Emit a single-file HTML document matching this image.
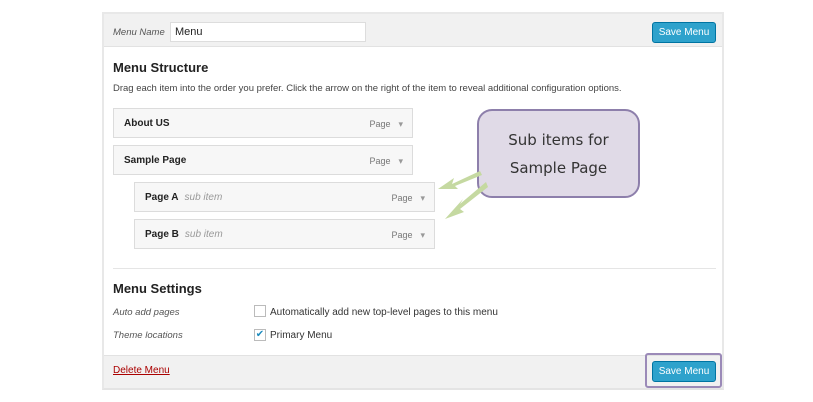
<!DOCTYPE html>
<html><head><style>
*{margin:0;padding:0;box-sizing:border-box}
body{width:813px;height:402px;background:#fff;position:relative;font-family:"Liberation Sans",sans-serif;color:#222;overflow:hidden}
.a{position:absolute}
.item{position:absolute;height:30px;border:1px solid #dcdcdc;background:#f7f7f7;font-size:10px;font-weight:bold;line-height:30px;padding-left:10px;color:#222}
.item .pg{position:absolute;right:9px;top:0;font-weight:normal;color:#777;font-size:9px}
.item .pg:after{content:"▾";margin-left:8px;color:#999;font-size:9px}
.item i{font-weight:normal;color:#999;margin-left:6px}
.btn{position:absolute;background:#2ea2cc;border:1px solid #0074a2;border-radius:3px;color:#fff;font-size:10px;text-align:center;line-height:19px}
.lbl{font-style:italic;color:#555;font-size:9.5px}
</style></head><body>
<div class="a" style="left:102px;top:12px;width:622px;height:378px;border:2px solid #e8e8e8;border-bottom:2px solid #e4e4e4;background:#fff"></div>
<div class="a" style="left:104px;top:14px;width:618px;height:33px;background:#f1f1f1;border-bottom:1px solid #e2e2e2"></div>
<div class="a lbl" style="left:113px;top:27px">Menu Name</div>
<div class="a" style="left:170px;top:22px;width:196px;height:20px;border:1px solid #ddd;background:#fff;font-size:11px;line-height:18px;padding-left:4px">Menu</div>
<div class="btn" style="left:652px;top:22px;width:64px;height:21px">Save Menu</div>
<div class="a" style="left:113px;top:60px;font-size:13px;font-weight:bold;color:#222">Menu Structure</div>
<div class="a" style="left:113px;top:83px;font-size:9.5px;color:#444">Drag each item into the order you prefer. Click the arrow on the right of the item to reveal additional configuration options.</div>
<div class="item" style="left:113px;top:108px;width:300px">About US<span class="pg">Page</span></div>
<div class="item" style="left:113px;top:145px;width:300px">Sample Page<span class="pg">Page</span></div>
<div class="item" style="left:134px;top:182px;width:301px">Page A<i>sub item</i><span class="pg">Page</span></div>
<div class="item" style="left:134px;top:219px;width:301px">Page B<i>sub item</i><span class="pg">Page</span></div>
<div class="a" style="left:477px;top:109px;width:163px;height:89px;background:#e0dae7;border:2px solid #8d7fab;border-radius:15px;text-align:center;font-family:'DejaVu Sans',sans-serif;font-size:15px;line-height:28px;color:#333;padding-top:15px">Sub items for<br>Sample Page</div>
<svg class="a" style="left:430px;top:160px" width="60" height="70"><polygon points="50,11 22,24 24,18 8,29 28,29 25,26 52,15" fill="#c5d9a1"/><polygon points="56,22 30,44 33,39 15,59 34,52 30,49 58,27" fill="#c5d9a1"/></svg>
<div class="a" style="left:113px;top:268px;width:603px;height:1px;background:#e5e5e5"></div>
<div class="a" style="left:113px;top:281px;font-size:13px;font-weight:bold">Menu Settings</div>
<div class="a lbl" style="left:113px;top:307px">Auto add pages</div>
<div class="a lbl" style="left:113px;top:330px">Theme locations</div>
<div class="a" style="left:254px;top:305px;width:12px;height:12px;border:1px solid #bbb;background:#fff"></div>
<div class="a" style="left:254px;top:329px;width:12px;height:12px;border:1px solid #bbb;background:#fff;color:#1e8cbe;font-size:10px;line-height:10px;text-align:center">✔</div>
<div class="a" style="left:270px;top:307px;font-size:10px;color:#333">Automatically add new top-level pages to this menu</div>
<div class="a" style="left:270px;top:330px;font-size:10px;color:#333">Primary Menu</div>
<div class="a" style="left:104px;top:355px;width:618px;height:33px;background:#f1f1f1;border-top:1px solid #e2e2e2"></div>
<div class="a" style="left:113px;top:365px;font-size:10px;color:#a00;text-decoration:underline">Delete Menu</div>
<div class="a" style="left:645px;top:353px;width:77px;height:35px;border:2px solid #9b8ab8;border-radius:3px"></div>
<div class="btn" style="left:652px;top:361px;width:64px;height:21px">Save Menu</div>
</body></html>
